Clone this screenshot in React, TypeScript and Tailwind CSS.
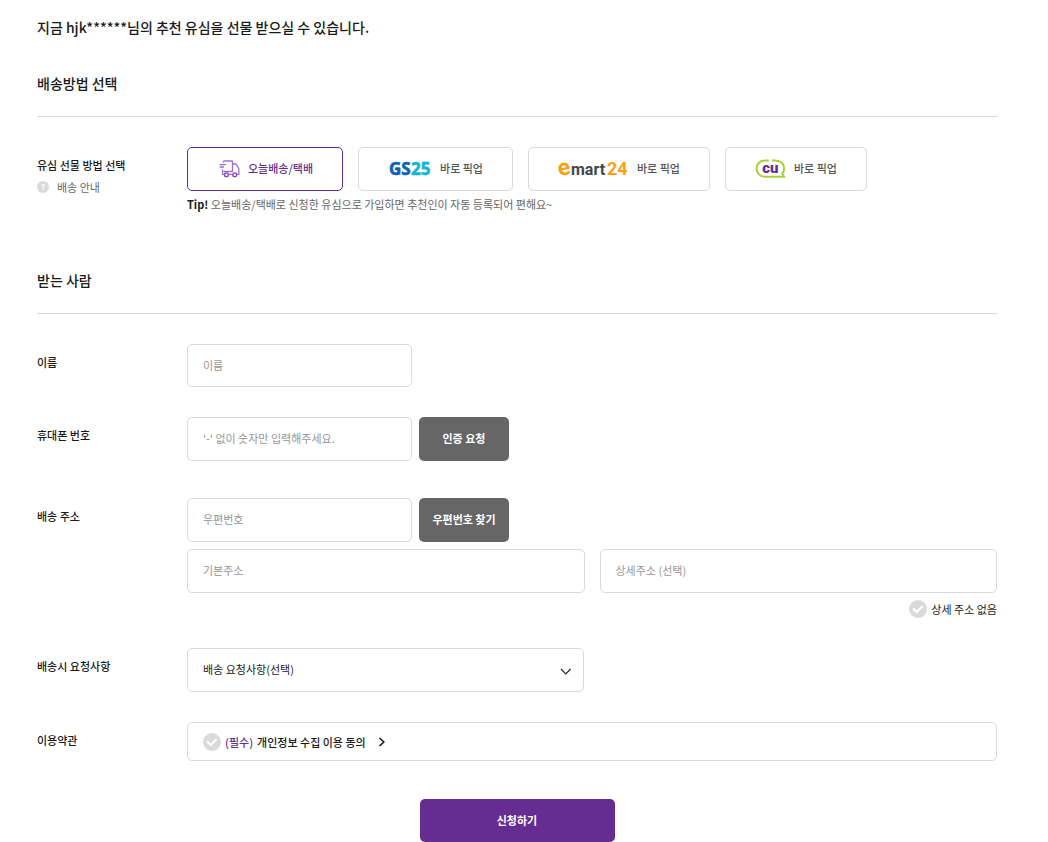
import { useState } from "react";
import type { ReactNode } from "react";

const TruckIcon = () => (
  <svg width="23" height="18" viewBox="0 0 23 18" fill="none" stroke="#9b6fd6" strokeWidth="1.3" strokeLinecap="round" strokeLinejoin="round" aria-hidden="true">
    <path d="M6.5 2V1.6Q6.5 1 7.1 1H14.9Q15.5 1 15.5 1.6V11.5H7" />
    <path d="M15.5 4H19L21.8 8.5V14.4H20.4" />
    <path d="M3.2 4.6H8.4M3.2 7H6.6" />
    <path d="M5.5 9.8V14.4H7M11.8 14.4H15" />
    <circle cx="9.4" cy="14.8" r="1.9" stroke="#7a3fc4" />
    <circle cx="17.7" cy="14.8" r="1.9" stroke="#7a3fc4" />
  </svg>
);

const Gs25Logo = () => (
  <svg width="44" height="26" viewBox="0 0 44 26" className="font-['Noto_Sans',sans-serif]" fontSize="17" fontWeight="700" strokeWidth="0.6" aria-hidden="true">
    <text x="1" y="19" fill="#0a63b4" stroke="#0a63b4">GS</text>
    <text x="23" y="19" fill="#14b4d8" stroke="#14b4d8">25</text>
  </svg>
);

const EmartLogo = () => (
  <svg width="71" height="32" viewBox="0 0 71 32" className="overflow-visible font-['Roboto',sans-serif]" fontWeight="700" aria-hidden="true">
    <text x="0" y="22" fontSize="23" fill="#ff9f0f" transform="rotate(-12 6 17)">e</text>
    <text x="13" y="22" fontSize="16" fill="#45464b">mart</text>
    <text x="49" y="22" fontSize="18" fill="#ff9f0f">24</text>
  </svg>
);

const CuLogo = () => (
  <svg width="31" height="20" viewBox="0 0 31 20" className="overflow-visible font-['Roboto',sans-serif]" aria-hidden="true">
    <path d="M13.7 1.5H10.4C4.9 1.5 1.6 5 1.6 9.5S4.9 17.8 10.4 17.8H29L27.2 14.8C28.6 13.3 29.1 11.4 29.1 9.5C29.1 5 25.6 1.5 20.2 1.5H16.8" fill="none" stroke="#a9cf38" strokeWidth="2" />
    <text x="15.4" y="13.5" textAnchor="middle" fontSize="15" fontWeight="900" fill="#652d92">cu</text>
  </svg>
);

const methods = [
  { id: "today", label: "오늘배송/택배", logo: <TruckIcon /> },
  { id: "gs25", label: "바로 픽업", logo: <Gs25Logo /> },
  { id: "emart24", label: "바로 픽업", logo: <EmartLogo /> },
  { id: "cu", label: "바로 픽업", logo: <CuLogo /> },
];

const inputStyle =
  "min-w-0 rounded-[5px] border border-[#dadada] bg-white px-[15px] pb-[2px] text-[11px] text-[#222] placeholder:text-[#959595] placeholder:opacity-100";
const darkButton =
  "h-11 w-[90px] shrink-0 rounded-[5px] bg-[#666] pb-[2px] text-[11px] font-bold text-white";

function SectionTitle({ children }: { children: ReactNode }) {
  return (
    <h2 className="border-b border-[#dadada] pb-[23px] text-sm leading-5 font-medium">
      {children}
    </h2>
  );
}

function Row({ label, htmlFor, children }: { label: string; htmlFor: string; children: ReactNode }) {
  return (
    <div className="flex">
      <label htmlFor={htmlFor} className="w-[150px] shrink-0 pt-[10px] text-[11px] leading-4 font-medium">
        {label}
      </label>
      <div className="min-w-0 flex-1">{children}</div>
    </div>
  );
}

function RoundCheck({ id }: { id: string }) {
  return (
    <span className="relative flex h-[18px] w-[18px] shrink-0">
      <input id={id} type="checkbox" className="h-[18px] w-[18px] appearance-none rounded-full bg-[#dadada] checked:bg-[#652d92]" />
      <svg className="pointer-events-none absolute inset-0" width="18" height="18" viewBox="0 0 18 18" fill="none" stroke="#fff" strokeWidth="2.2" aria-hidden="true">
        <path d="M4 8.4L7.8 12L13.6 6" />
      </svg>
    </span>
  );
}

export default function App() {
  const [method, setMethod] = useState("today");

  return (
    <main className="bg-white pr-[51px] pl-[37px] pt-[17px] font-['Noto_Sans_CJK_KR',sans-serif] text-[#1a1a1a]">
      <h1 className="text-sm leading-5 font-medium">
        지금 hjk******님의 추천 유심을 선물 받으실 수 있습니다.
      </h1>

      <section className="pt-9">
        <SectionTitle>배송방법 선택</SectionTitle>
        <div className="flex pt-[30px]">
          <div className="w-[150px] shrink-0 pt-[10px]">
            <h3 className="text-[11px] leading-4 font-medium">유심 선물 방법 선택</h3>
            <a href="#guide" className="mt-[6px] flex items-center gap-2 text-[11px] leading-4 text-[#666]">
              <span className="flex h-3 w-3 items-center justify-center rounded-full bg-[#dadada] text-[8px] font-bold text-white">?</span>
              배송 안내
            </a>
          </div>
          <div className="min-w-0 flex-1">
            <div className="flex flex-wrap gap-[15px]">
              {methods.map((item) => (
                <button
                  key={item.id}
                  type="button"
                  aria-pressed={method === item.id}
                  onClick={() => setMethod(item.id)}
                  className={`flex h-11 items-center gap-2 rounded-[5px] border px-[29px] text-[11px] font-medium ${
                    method === item.id ? "border-[#652d92] text-[#652d92]" : "border-[#dadada] text-[#555]"
                  }`}
                >
                  {item.logo}
                  <span className="pb-[2px]">{item.label}</span>
                </button>
              ))}
            </div>
            <p className="mt-[5px] text-[11px] leading-4 text-[#666]">
              <strong className="font-bold text-[#1a1a1a]">Tip!</strong> 오늘배송/택배로 신청한 유심으로 가입하면 추천인이 자동 등록되어 편해요~
            </p>
          </div>
        </div>
      </section>

      <form className="pt-[58px]" onSubmit={(e) => e.preventDefault()}>
        <SectionTitle>받는 사람</SectionTitle>
        <div className="flex flex-col gap-[30px] pt-[30px]">
          <Row label="이름" htmlFor="name">
            <input id="name" placeholder="이름" className={`${inputStyle} block h-[43px] w-[225px]`} />
          </Row>

          <Row label="휴대폰 번호" htmlFor="phone">
            <div className="flex gap-[7px] pb-[7px]">
              <input id="phone" type="tel" placeholder="'-' 없이 숫자만 입력해주세요." className={`${inputStyle} h-11 w-[225px]`} />
              <button type="button" className={darkButton}>인증 요청</button>
            </div>
          </Row>

          <Row label="배송 주소" htmlFor="zip">
            <div className="flex flex-col gap-[7px]">
              <div className="flex gap-[7px]">
                <input id="zip" placeholder="우편번호" className={`${inputStyle} h-11 w-[225px]`} />
                <button type="button" className={darkButton}>우편번호 찾기</button>
              </div>
              <div className="flex gap-[15px]">
                <input aria-label="기본주소" placeholder="기본주소" className={`${inputStyle} h-11 flex-1`} />
                <input aria-label="상세주소" placeholder="상세주소 (선택)" className={`${inputStyle} h-11 flex-1`} />
              </div>
              <label htmlFor="no-detail" className="flex items-center gap-1 self-end text-[11px] leading-4">
                <RoundCheck id="no-detail" />
                상세 주소 없음
              </label>
            </div>
          </Row>

          <Row label="배송시 요청사항" htmlFor="request">
            <div className="relative w-[calc(50%-8px)]">
              <select id="request" className={`${inputStyle} block h-11 w-full appearance-none`}>
                <option>배송 요청사항(선택)</option>
              </select>
              <svg className="pointer-events-none absolute top-5 right-3" width="12" height="8" viewBox="0 0 12 8" fill="none" stroke="#222" strokeWidth="1.2" aria-hidden="true">
                <path d="M1 1L5.8 5.8L10.6 1" />
              </svg>
            </div>
          </Row>

          <Row label="이용약관" htmlFor="terms">
            <div className="flex h-[39px] items-center rounded-[5px] border border-[#dadada] px-[15px] text-[11px] leading-4 font-medium">
              <label htmlFor="terms" className="flex items-center gap-1">
                <RoundCheck id="terms" />
                <span className="text-[#652d92]">(필수)</span>
                <span>개인정보 수집 이용 동의</span>
              </label>
              <button type="button" aria-label="약관 보기" className="ml-3">
                <svg width="8" height="10" viewBox="0 0 8 10" fill="none" stroke="#1a1a1a" strokeWidth="1.6" aria-hidden="true">
                  <path d="M1.5 1L5.8 5L1.5 9" />
                </svg>
              </button>
            </div>
          </Row>
        </div>

        <button type="submit" className="mx-auto mt-[38px] block h-[43px] w-[195px] rounded-[5px] bg-[#652d92] text-[11px] font-bold text-white">
          신청하기
        </button>
      </form>
    </main>
  );
}
